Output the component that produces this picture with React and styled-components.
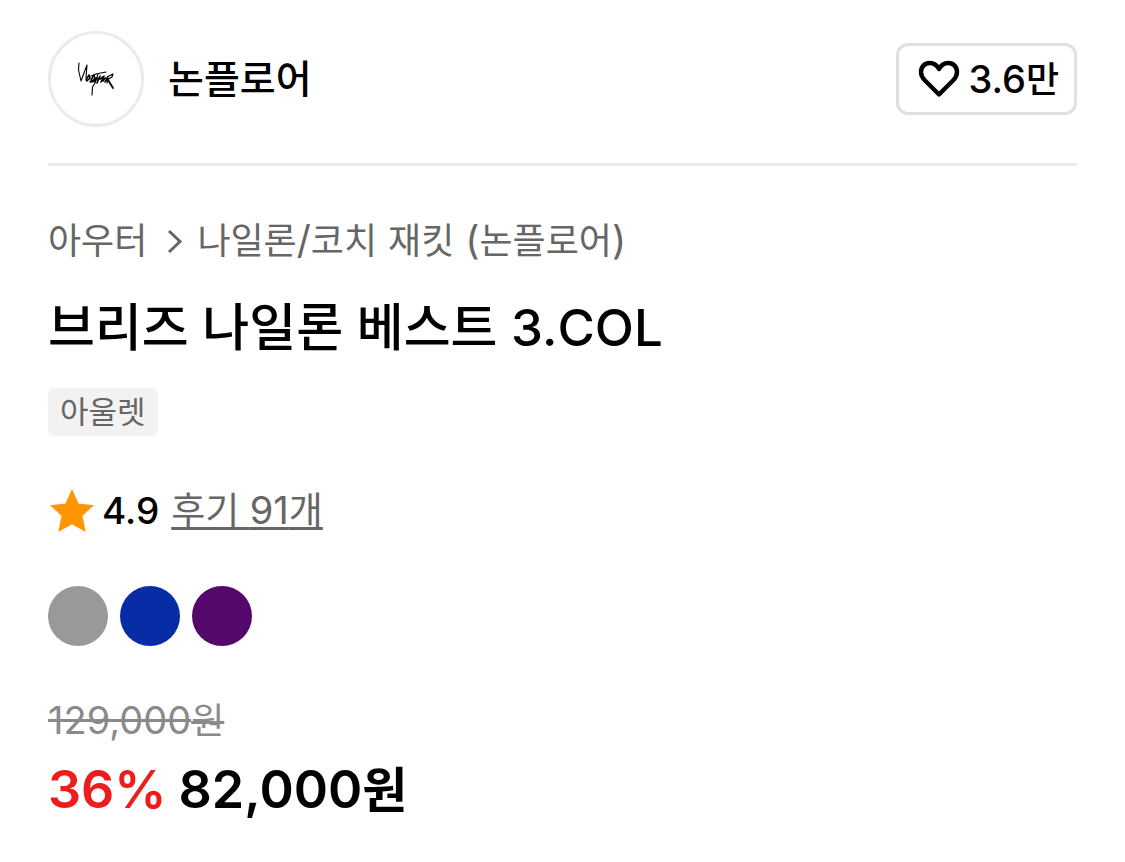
import React from "react";
import styled, { createGlobalStyle } from "styled-components";

const GlobalStyle = createGlobalStyle`
  *, *::before, *::after { box-sizing: border-box; }
  body {
    margin: 0;
    background: #fff;
    color: #000;
    font-family: Inter, "Noto Sans CJK KR", sans-serif;
  }
  h1, p { margin: 0; font-weight: inherit; }
  a { color: inherit; text-decoration: none; }
`;

const Page = styled.main`
  padding: 31px 48px 36px;
`;

const BrandBar = styled.header`
  display: flex;
  align-items: center;
  justify-content: space-between;
  padding-bottom: 36px;
  border-bottom: 3px solid #ebebeb;
`;

const BrandLink = styled.a`
  display: flex;
  align-items: center;
  gap: 24px;
  font-size: 39px;
  line-height: 60px;
  font-weight: 500;
`;

const BrandLogo = styled.span`
  display: flex;
  align-items: center;
  justify-content: center;
  width: 96px;
  height: 96px;
  border: 3px solid #ebebeb;
  border-radius: 50%;
`;

const LikeButton = styled.button`
  display: flex;
  align-items: center;
  gap: 8px;
  height: 72px;
  padding: 0 15px 0 19px;
  border: 3px solid #e0e0e0;
  border-radius: 12px;
  background: #fff;
  color: #000;
  font-family: inherit;
  font-size: 36px;
  line-height: 54px;
  font-weight: 500;
  cursor: pointer;
`;

const Latin = styled.span`
  font-size: ${(p) => p.$size}px;
`;

const Breadcrumb = styled.nav`
  display: flex;
  align-items: center;
  gap: 13px;
  margin-top: 47px;
  color: #666;
  font-size: 36px;
  line-height: 54px;
`;

const Title = styled.h1`
  margin-top: 24px;
  font-size: 51px;
  line-height: 72px;
  font-weight: 500;
`;

const Tag = styled.span`
  display: block;
  width: fit-content;
  margin-top: 24px;
  padding: 0 12px;
  border-radius: 6px;
  background: #f2f2f2;
  color: #666;
  font-size: 31px;
  line-height: 48px;
`;

const Rating = styled.div`
  display: flex;
  align-items: center;
  margin-top: 47px;
  font-size: 37px;
  line-height: 54px;
`;

const Score = styled.span`
  margin: 0 12px 0 6px;
  font-size: 37px;
  font-weight: 500;
`;

const ReviewLink = styled.a`
  && {
    color: #666;
    text-decoration: underline;
    text-decoration-thickness: 3px;
    text-underline-offset: 3px;
    text-decoration-skip-ink: none;
  }
`;

const Swatches = styled.div`
  display: flex;
  gap: 12px;
  margin-top: 48px;
`;

const Swatch = styled.button`
  width: 60px;
  height: 60px;
  padding: 0;
  border: 0;
  border-radius: 50%;
  background: ${(p) => p.$color};
  cursor: pointer;
`;

const OriginalPrice = styled.del`
  display: block;
  margin-top: 47px;
  color: #8a8a8a;
  font-size: 36px;
  line-height: 54px;
  text-decoration-thickness: 3px;
`;

const Price = styled.p`
  display: flex;
  gap: 12px;
  margin-top: 6px;
  font-size: 49px;
  line-height: 72px;
  font-weight: 600;
`;

const Discount = styled.span`
  color: #ee1c1c;
  font-size: 52px;
`;

const COLORS = [
  { name: "그레이", value: "#999999" },
  { name: "블루", value: "#082ba6" },
  { name: "퍼플", value: "#54086b" },
];

function SignatureMark() {
  return (
    <svg width="40" height="36" viewBox="0 0 40 36" fill="none" stroke="#000" strokeLinecap="round" strokeLinejoin="round" aria-hidden="true">
      <path d="M3 2 L2.500 9 L5 20 L11 4 L10 17" strokeWidth="1.1" />
      <path d="M10 19 L13 14 L14 17 L11 20 M15 19 L18 14 L19 17 L16 21 M14 21 L22 17 L18 21" strokeWidth="1.500" />
      <path d="M15 15 L20 13 L30 11" strokeWidth="1.200" />
      <path d="M22 13 L19 22 L16.500 26 L16 34" strokeWidth="1.100" />
      <path d="M24 15 L21 22 M24 18 L27 16 M28 15 L25 21 M27 20 L29 17 L31 18 L29 21" strokeWidth="1.600" />
      <path d="M32 15 L31 22 M31 16 L37 13 L36 16 L31 19" strokeWidth="1.200" />
      <path d="M32 19 L37 27" strokeWidth="1.800" />
    </svg>
  );
}

function HeartIcon() {
  return (
    <svg width="42" height="38" viewBox="0 0 42 38" fill="none" stroke="#000" strokeWidth="4.400" strokeLinejoin="round" aria-hidden="true">
      <path d="M21 9 C18.500 4.500 15 3 11.800 3 C6.500 3 3 7 3 12 C3 15.500 4.500 18 7 20.500 L21 34.500 L35 20.500 C37.500 18 39 15.500 39 12 C39 7 35.500 3 30.200 3 C27 3 23.500 4.500 21 9 Z" />
    </svg>
  );
}

function ChevronIcon() {
  return (
    <svg width="24" height="30" viewBox="0 0 24 30" fill="none" stroke="#666" strokeWidth="3" aria-hidden="true">
      <path d="M9 5 L20 15.500 L9 26" />
    </svg>
  );
}

function StarIcon() {
  return (
    <svg width="48" height="48" viewBox="0 0 48 48" fill="#ff9500" aria-hidden="true">
      <path d="M24 2 L30.500 16.500 L46 18.200 L34.500 28.700 L37.700 45 L24 37.200 L10.300 45 L13.500 28.700 L2 18.200 L17.500 16.500 Z" />
    </svg>
  );
}

export default function App() {
  return (
    <>
      <GlobalStyle />
      <Page>
        <BrandBar>
          <BrandLink href="#brand">
            <BrandLogo>
              <SignatureMark />
            </BrandLogo>
            논플로어
          </BrandLink>
          <LikeButton type="button">
            <HeartIcon />
            <span>
              <Latin $size={38}>3.6</Latin>만
            </span>
          </LikeButton>
        </BrandBar>

        <Breadcrumb>
          <a href="#outer">아우터</a>
          <ChevronIcon />
          <a href="#nylon">
            나일론<Latin $size={39}>/</Latin>코치<Latin $size={39}> </Latin>재킷
            <Latin $size={39}> (</Latin>논플로어<Latin $size={39}>)</Latin>
          </a>
        </Breadcrumb>

        <Title>
          브리즈 나일론 베스트 <Latin $size={51}>3.COL</Latin>
        </Title>

        <Tag>아울렛</Tag>

        <Rating>
          <StarIcon />
          <Score>4.9</Score>
          <ReviewLink href="#reviews">
            후기 <Latin $size={38}>91</Latin>개
          </ReviewLink>
        </Rating>

        <Swatches>
          {COLORS.map((c) => (
            <Swatch key={c.name} type="button" aria-label={c.name} $color={c.value} />
          ))}
        </Swatches>

        <OriginalPrice>
          <Latin $size={38}>129,000</Latin>원
        </OriginalPrice>
        <Price>
          <Discount>36%</Discount>
          <span>
            <Latin $size={52}>82,000</Latin>원
          </span>
        </Price>
      </Page>
    </>
  );
}
